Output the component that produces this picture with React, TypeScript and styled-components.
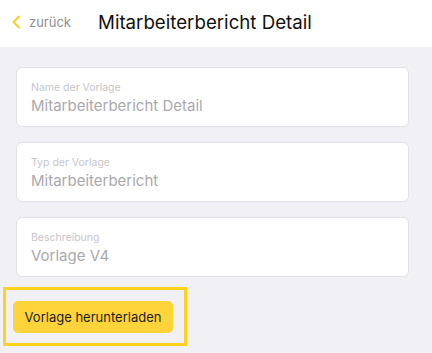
import styled, { createGlobalStyle } from 'styled-components';

const GlobalStyle = createGlobalStyle`
  body {
    margin: 0;
    background: #f0f0f5;
    font-family: Inter, "Noto Sans", sans-serif;
  }
`;

const Page = styled.div`
  min-height: 353px;
  background: #f0f0f5;
`;

const Header = styled.div`
  height: 47px;
  background: #fff;
  display: flex;
  align-items: center;
  padding-left: 11px;
  box-sizing: border-box;
`;

const Back = styled.div`
  display: flex;
  align-items: center;
  gap: 8px;
  width: 87px;
  font-size: 13px;
  color: #8e8e93;
  margin-top: -3px;

  > svg {
    width: 10px;
    height: 14px;
  }
`;

const Title = styled.h1`
  margin: 0;
  font-size: 18.7px;
  font-weight: 400;
  color: #111;
  margin-top: -2px;
`;

const Content = styled.div`
  padding: 20px 23px 0 16px;
  display: flex;
  flex-direction: column;
  gap: 15px;
`;

const Field = styled.div`
  height: 60px;
  box-sizing: border-box;
  background: #fff;
  border: 1px solid #e2e2e6;
  border-radius: 6px;
  padding: 13px 14px 0;
  display: flex;
  flex-direction: column;
  gap: 2px;
`;

const Label = styled.div`
  font-size: 10.5px;
  color: #c6c6c9;
`;

const Value = styled.div`
  font-size: 15px;
  color: #a9a9ac;
`;

const Frame = styled.div`
  margin: 10px 0 0 3px;
  width: 184px;
  box-sizing: border-box;
  border: 3px solid #ffd21f;
  padding: 11px 9px 10px 7px;
`;

const Button = styled.button`
  width: 160px;
  height: 32px;
  border: none;
  border-radius: 5px;
  background: #ffd43b;
  color: #1c1c1c;
  font-family: Inter, "Noto Sans", sans-serif;
  font-size: 13px;
  padding: 0;
`;

const fields = [
  { label: 'Name der Vorlage', value: 'Mitarbeiterbericht Detail' },
  { label: 'Typ der Vorlage', value: 'Mitarbeiterbericht' },
  { label: 'Beschreibung', value: 'Vorlage V4' },
];

function App() {
  return (
    <Page>
      <GlobalStyle />
      <Header>
        <Back>
          <svg viewBox="0 0 10 14" fill="none">
            <path d="M8 1.5L2.5 7L8 12.5" stroke="#ffcc1f" strokeWidth="2" strokeLinecap="round" strokeLinejoin="round" />
          </svg>
          zurück
        </Back>
        <Title>Mitarbeiterbericht Detail</Title>
      </Header>
      <Content>
        {fields.map((f) => (
          <Field key={f.label}>
            <Label>{f.label}</Label>
            <Value>{f.value}</Value>
          </Field>
        ))}
      </Content>
      <Frame>
        <Button>Vorlage herunterladen</Button>
      </Frame>
    </Page>
  );
}

export default App;
